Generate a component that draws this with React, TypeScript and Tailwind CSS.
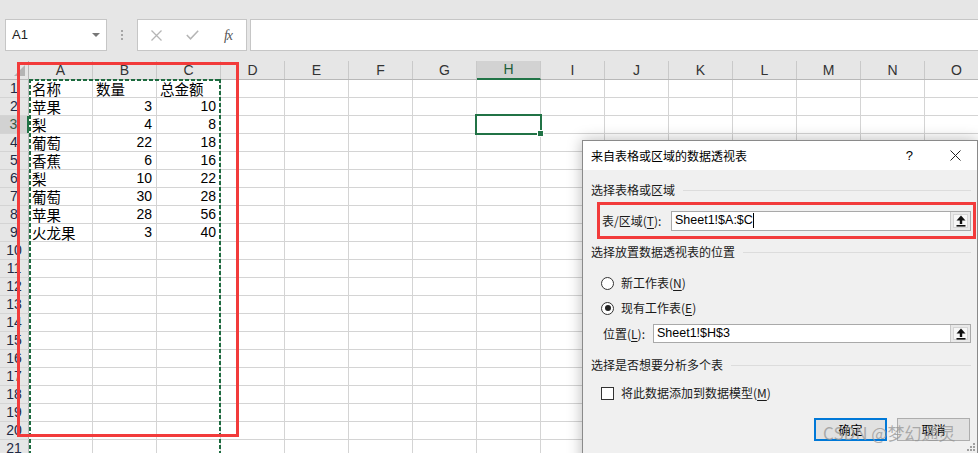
import React from "react"

const cols = ["A", "B", "C", "D", "E", "F", "G", "H", "I", "J", "K", "L", "M", "N", "O"]

const data: Record<number, [string, string, string]> = {
  1: ["名称", "数量", "总金额"],
  2: ["苹果", "3", "10"],
  3: ["梨", "4", "8"],
  4: ["葡萄", "22", "18"],
  5: ["香蕉", "6", "16"],
  6: ["梨", "10", "22"],
  7: ["葡萄", "30", "28"],
  8: ["苹果", "28", "56"],
  9: ["火龙果", "3", "40"],
}

const cjk = { fontFamily: '"Noto Sans CJK SC", "Noto Sans", sans-serif' }
const latin = { fontFamily: '"Liberation Sans", Arial, sans-serif' }

function UploadIcon() {
  return (
    <svg width="10" height="12" viewBox="0 0 10 12">
      <polygon points="5,0.5 0.5,5.5 9.5,5.5" fill="#111" />
      <rect x="3.8" y="5" width="2.4" height="4" fill="#111" />
      <rect x="0.5" y="10" width="9" height="1.6" fill="#111" />
    </svg>
  )
}

function RefInput({ value, cursor }: { value: string; cursor?: boolean }) {
  return (
    <div className="flex-1 h-full flex items-center bg-white border border-[#a9a9a9]">
      <span className="pl-[3px] text-[12.5px] text-black leading-none" style={latin}>
        {value}
      </span>
      {cursor && <span className="w-px h-[15px] bg-black" />}
      <div className="ml-auto h-full w-[20px] border-l border-[#c8c8c8] bg-[#e9e9e9] flex items-center justify-center p-[2px]">
        <div className="w-full h-full bg-[#f7f7f7] border border-[#d6d6d6] flex items-center justify-center">
          <UploadIcon />
        </div>
      </div>
    </div>
  )
}

function SectionTitle({ children }: { children: React.ReactNode }) {
  return (
    <div className="h-4 flex items-center">
      <span className="text-[12px] text-[#1a1a1a] leading-4">{children}</span>
      <div className="flex-1 h-px bg-[#dcdcdc] ml-2" />
    </div>
  )
}

function U({ children }: { children: React.ReactNode }) {
  return <span className="underline underline-offset-2">{children}</span>
}

function Dialog() {
  return (
    <div
      className="absolute left-[582px] top-[140px] w-[396px] h-[330px] border border-[#8a8a8a] bg-[#f0f0f0] flex flex-col shadow-[0_0_14px_rgba(0,0,0,0.28)]"
      style={cjk}
    >
      {/* title bar */}
      <div className="h-[29px] bg-white flex items-center pl-[8px] text-[12px] text-black">
        <span>来自表格或区域的数据透视表</span>
        <span className="ml-auto mr-[37px] text-[13px]" style={latin}>?</span>
        <svg width="11" height="11" viewBox="0 0 11 11" className="mr-[16px]">
          <path d="M0.5 0.5 L10.5 10.5 M10.5 0.5 L0.5 10.5" stroke="#222" strokeWidth="1" />
        </svg>
      </div>

      <div className="flex-1 pl-[8px] pr-[6px] flex flex-col text-[12px] text-[#1a1a1a]">
        <div className="mt-[12px]">
          <SectionTitle>选择表格或区域</SectionTitle>
        </div>

        {/* red annotation around the table/range row */}
        <div className="mt-[4px] ml-[6px] mr-[-5px] h-[37px] border-[3px] border-[#f23b3b] flex items-center pl-[2px] pr-[2px]">
          <span className="w-[69px] leading-4">
            表/区域(<U>T</U>):
          </span>
          <div className="flex-1 h-[20px] flex">
            <RefInput value="Sheet1!$A:$C" cursor />
          </div>
        </div>

        <div className="mt-[5px]">
          <SectionTitle>选择放置数据透视表的位置</SectionTitle>
        </div>

        <div className="mt-[15px] ml-[10px] h-4 flex items-center">
          <span className="w-[13px] h-[13px] rounded-full border border-[#333] bg-white" />
          <span className="ml-[7px] leading-4">
            新工作表(<U>N</U>)
          </span>
        </div>
        <div className="mt-[9px] ml-[10px] h-4 flex items-center">
          <span className="w-[13px] h-[13px] rounded-full border border-[#333] bg-white flex items-center justify-center">
            <span className="w-[6px] h-[6px] rounded-full bg-[#222]" />
          </span>
          <span className="ml-[7px] leading-4">
            现有工作表(<U>E</U>)
          </span>
        </div>

        <div className="mt-[8px] ml-[12px] h-[19px] flex items-center">
          <span className="w-[50px] leading-4">
            位置(<U>L</U>):
          </span>
          <div className="flex-1 h-[19px] flex">
            <RefInput value="Sheet1!$H$3" />
          </div>
        </div>

        <div className="mt-[14px]">
          <SectionTitle>选择是否想要分析多个表</SectionTitle>
        </div>

        <div className="mt-[12px] ml-[10px] h-4 flex items-center">
          <span className="w-[13px] h-[13px] border border-[#333] bg-white" />
          <span className="ml-[7px] leading-4">
            将此数据添加到数据模型(<U>M</U>)
          </span>
        </div>

        <div className="mt-[17px] flex justify-end gap-[10px] mr-px">
          <button className="w-[73px] h-[23px] border-2 border-[#0078d7] bg-[#e1e1e1] text-[12px] text-black">
            确定
          </button>
          <button className="w-[73px] h-[23px] border border-[#adadad] bg-[#e1e1e1] text-[12px] text-black">
            取消
          </button>
        </div>
      </div>

      {/* resize grip */}
      <div className="absolute right-[2px] top-[302px] grid grid-cols-3 gap-px">
        {[0, 1, 2, 3, 4, 5, 6, 7, 8].map((i) => (
          <span
            key={i}
            className={
              i === 0 || i === 1 || i === 3 ? "w-[2px] h-[2px]" : "w-[2px] h-[2px] bg-[#a0a0a0]"
            }
          />
        ))}
      </div>
    </div>
  )
}

export default function App() {
  const rows = Array.from({ length: 21 }, (_, i) => i + 1)

  return (
    <div className="relative w-[978px] h-[453px] overflow-hidden bg-white select-none">
      {/* formula bar */}
      <div className="h-[61px] bg-[#e6e6e6] flex items-start pt-[19px] pl-[5px]">
        <div className="w-[102px] h-[32px] bg-white border border-[#c6c6c6] flex items-center pl-[6px] pr-[6px]">
          <span className="text-[13px] text-[#222]" style={latin}>A1</span>
          <span className="ml-auto w-0 h-0 border-l-[4px] border-r-[4px] border-t-[4px] border-l-transparent border-r-transparent border-t-[#777]" />
        </div>
        <div className="w-[30px] h-[32px] flex flex-col items-center justify-center gap-[2px]">
          <span className="w-[2px] h-[2px] bg-[#a6a6a6]" />
          <span className="w-[2px] h-[2px] bg-[#a6a6a6]" />
          <span className="w-[2px] h-[2px] bg-[#a6a6a6]" />
        </div>
        <div className="w-[110px] h-[32px] bg-white border border-[#c6c6c6] flex items-center">
          <div className="w-[36px] flex justify-center">
            <svg width="11" height="11" viewBox="0 0 11 11">
              <path d="M0.5 0.5 L10.5 10.5 M10.5 0.5 L0.5 10.5" stroke="#b5b5b5" strokeWidth="1.3" />
            </svg>
          </div>
          <div className="w-[36px] flex justify-center">
            <svg width="13" height="10" viewBox="0 0 13 10">
              <path d="M0.8 5 L4.5 8.8 L12.2 0.8" stroke="#b5b5b5" strokeWidth="1.5" fill="none" />
            </svg>
          </div>
          <div className="w-[36px] flex justify-center">
            <span
              className="italic text-[14px] text-[#555] tracking-[-1px]"
              style={{ fontFamily: '"Liberation Serif", "Times New Roman", serif' }}
            >
              fx
            </span>
          </div>
        </div>
        <div className="ml-[3px] flex-1 h-[32px] bg-white border border-[#c6c6c6] border-r-0" />
      </div>

      {/* column headers */}
      <div className="flex h-[19px] bg-[#e6e6e6] border-b border-[#b8b8b8]">
        <div className="w-[29px] shrink-0 border-r border-[#b8b8b8] relative">
          <svg width="11" height="11" viewBox="0 0 11 11" className="absolute right-[3px] bottom-[3px]">
            <polygon points="11,0 11,11 0,11" fill="#b4b4b4" />
          </svg>
        </div>
        {cols.map((c) => (
          <div
            key={c}
            className={
              c === "H"
                ? "w-[64px] shrink-0 border-r border-[#c9c9c9] bg-[#d2d2d2] border-b-2 border-b-[#217346] mb-[-1px] flex items-center justify-center text-[14px] text-[#1e5e38]"
                : "w-[64px] shrink-0 border-r border-[#c9c9c9] flex items-center justify-center text-[14px] text-[#333]"
            }
            style={latin}
          >
            {c}
          </div>
        ))}
      </div>

      {/* rows */}
      {rows.map((r) => {
        const d = data[r]
        return (
          <div key={r} className="flex h-[18px] border-b border-[#d4d4d4]">
            <div
              className={
                r === 3
                  ? "w-[29px] shrink-0 bg-[#d2d2d2] border-r-2 border-[#217346] flex items-center justify-center text-[14px] text-[#3a5a48]"
                  : "w-[29px] shrink-0 bg-[#e6e6e6] border-r border-[#b8b8b8] flex items-center justify-center text-[14px] text-[#1f2a44]"
              }
              style={latin}
            >
              {r}
            </div>
            {cols.map((c, ci) => {
              const v = d && ci < 3 ? d[ci] : ""
              const numeric = /^\d+$/.test(v)
              return (
                <div
                  key={c}
                  className={
                    numeric
                      ? "w-[64px] shrink-0 border-r border-[#d4d4d4] flex items-center justify-end pr-[4px] text-[14px] text-black leading-[17px]"
                      : "w-[64px] shrink-0 border-r border-[#d4d4d4] flex items-center pl-[3px] text-[14.5px] text-black leading-[17px]"
                  }
                  style={numeric ? latin : cjk}
                >
                  {v}
                </div>
              )
            })}
          </div>
        )
      })}

      {/* copy marquee around A:C */}
      <div className="absolute left-[29px] top-[79px] w-[192px] h-[2px] bg-[repeating-linear-gradient(to_right,#1d6b3f_0_4px,transparent_4px_6px)]" />
      <div className="absolute left-[29px] top-[79px] w-[2px] h-[380px] bg-[repeating-linear-gradient(to_bottom,#1d6b3f_0_4px,transparent_4px_6px)]" />
      <div className="absolute left-[219px] top-[79px] w-[2px] h-[380px] bg-[repeating-linear-gradient(to_bottom,#1d6b3f_0_4px,transparent_4px_6px)]" />

      {/* active cell H3 */}
      <div className="absolute left-[475px] top-[114px] w-[67px] h-[21px] border-2 border-[#217346]" />
      <div className="absolute left-[537px] top-[130px] w-[7px] h-[7px] bg-[#217346] border border-white" />

      {/* red annotation over A:C */}
      <div className="absolute left-[17px] top-[62px] w-[222px] h-[375px] border-[3px] border-[#f23b3b]" />

      <Dialog />

      {/* watermark */}
      <div
        className="absolute left-[823px] top-[421px] text-[17px] leading-[24px] text-[rgba(150,150,150,0.75)] whitespace-nowrap"
        style={cjk}
      >
        CSDN @梦幻通灵
      </div>
    </div>
  )
}
